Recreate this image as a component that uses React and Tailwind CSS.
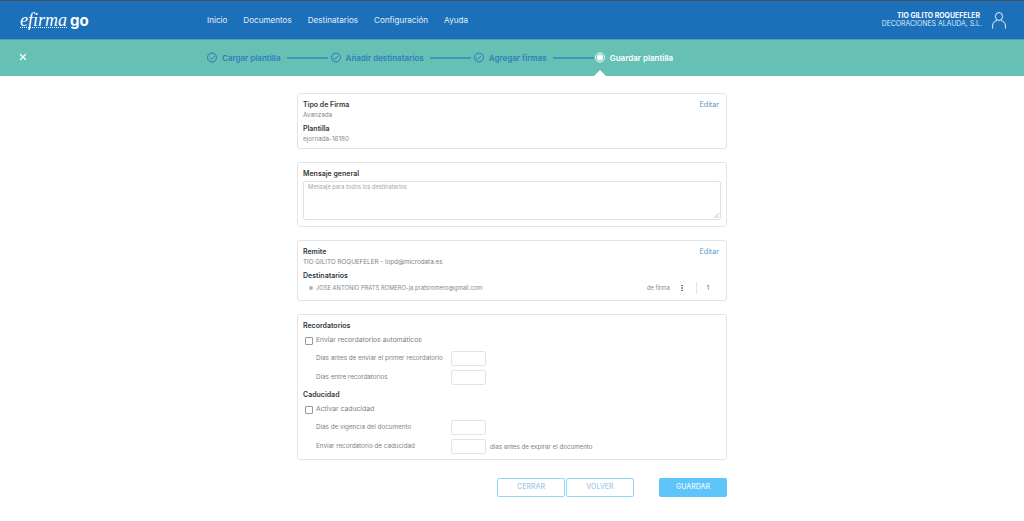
import { Check, X, EllipsisVertical } from 'lucide-react';

const navItems = ['Inicio', 'Documentos', 'Destinatarios', 'Configuración', 'Ayuda'];
const steps = ['Cargar plantilla', 'Añadir destinatarios', 'Agregar firmas'];

function Step({ label }) {
  return (
    <>
      <span className="w-[10px] h-[10px] rounded-full border border-[#2a77b8] flex items-center justify-center shrink-0">
        <Check className="w-[7px] h-[7px] text-[#2a77b8]" strokeWidth={3} />
      </span>
      <span className="ml-[5px] text-[8px] font-semibold text-[#2f7fbd] whitespace-nowrap">{label}</span>
      <span className="ml-[6px] mr-[3px] w-[41px] h-px bg-[#1c70b8] shrink-0" />
    </>
  );
}

function Heading({ children }) {
  return <p className="text-[7px] leading-[10px] font-semibold text-[#33383d]">{children}</p>;
}

function Field({ label, suffix }) {
  return (
    <div className="flex items-center h-[15px] pl-[13px]">
      <span className="w-[135px] text-[6.3px] text-[#7b7f83] whitespace-nowrap">{label}</span>
      <span className="w-[35px] h-[15px] rounded-[2px] border border-[#e2e4e6] shrink-0" />
      {suffix && <span className="ml-1 text-[6.2px] text-[#7b7f83] whitespace-nowrap">{suffix}</span>}
    </div>
  );
}

function CheckRow({ label }) {
  return (
    <div className="flex items-center h-[9px] pl-[2px]">
      <span className="w-2 h-2 rounded-[1px] border border-[#999999] shrink-0" />
      <span className="ml-[3px] text-[6.8px] text-[#7b7f83]">{label}</span>
    </div>
  );
}

export default function App() {
  return (
    <div className="w-[1024px] h-[521px] overflow-hidden bg-white font-['Inter','Open_Sans',sans-serif]">
      {/* Header */}
      <header className="h-[39px] bg-[#1b70b9] border-t border-[#44505a] flex items-center text-white">
        <div className="w-[207px] pl-[20px] flex items-center shrink-0">
          <span className="relative font-['Liberation_Serif',serif] italic text-[18px] leading-none">
            efirma
            <span className="absolute left-0 right-0 bottom-[1px] border-b border-dotted border-white" />
          </span>
          <span className="ml-[3px] font-bold text-[15px] leading-none">go</span>
        </div>
        <nav className="flex gap-4 text-[8.1px] text-[#e4eef7]">
          {navItems.map((item) => (
            <span key={item}>{item}</span>
          ))}
        </nav>
        <div className="ml-auto flex items-center pr-[18px]">
          <div className="text-right text-[6.9px] leading-[8px]">
            <p className="font-bold pr-[2px]">TIO GILITO ROQUEFELER</p>
            <p className="text-[#dbe8f4]">DECORACIONES ALAUDA, S.L.</p>
          </div>
          <svg className="ml-[10px] w-[14px] h-[17px]" viewBox="0 0 14 17" fill="none" stroke="white" strokeWidth="0.9">
            <ellipse cx="7" cy="4.5" rx="3.6" ry="4" />
            <path d="M0.6 16.5V13.5C0.6 10.5 3 9 5 8.6M13.4 16.5V13.5C13.4 10.5 11 9 9 8.6" />
          </svg>
        </div>
      </header>

      {/* Steps */}
      <div className="relative h-[37px] bg-[#66c0b4] flex items-center border-t border-[#4f9dbd]">
        <X className="absolute left-[18px] top-[12px] w-[10px] h-[10px] text-white" strokeWidth={3} />
        <div className="ml-[207px] flex items-center -translate-y-[0.5px]">
          {steps.map((step) => (
            <Step key={step} label={step} />
          ))}
          <span className="-ml-[2px] w-[10px] h-[10px] rounded-full border border-white flex items-center justify-center shrink-0">
            <span className="w-[6px] h-[6px] rounded-full bg-white" />
          </span>
          <span className="ml-[5px] text-[8px] font-semibold text-white whitespace-nowrap">Guardar plantilla</span>
        </div>
        <span className="absolute left-[594px] bottom-0 w-0 h-0 border-x-[6px] border-x-transparent border-b-[6px] border-b-white" />
      </div>

      {/* Content */}
      <main className="w-[430px] ml-[297px] pt-[17px] flex flex-col gap-[13px]">
        <section className="h-[56px] rounded-[3px] border border-[#e2e4e6] px-[5px] pt-[6px] relative">
          <span className="absolute right-[7px] top-[6px] text-[7.2px] leading-[10px] text-[#5f97c9]">Editar</span>
          <Heading>Tipo de Firma</Heading>
          <p className="text-[6.3px] leading-[10px] text-[#85888c]">Avanzada</p>
          <div className="mt-[4px]"><Heading>Plantilla</Heading></div>
          <p className="text-[6.3px] leading-[10px] text-[#85888c]">ejornada-16180</p>
        </section>

        <section className="h-[65px] rounded-[3px] border border-[#e2e4e6] px-[5px] pt-[6px]">
          <Heading>Mensaje general</Heading>
          <div className="relative mt-[2px] h-[39px] rounded-[2px] border border-[#dfe1e3] px-[4px] text-[5.7px] leading-[9px] text-[#a3a6a9]">
            Mensaje para todos los destinatarios
            <svg className="absolute right-[1px] bottom-[1px] w-[5px] h-[5px]" viewBox="0 0 5 5">
              <path d="M0 5 5 0M2.5 5 5 2.5" stroke="#999" strokeWidth="0.6" />
            </svg>
          </div>
        </section>

        <section className="h-[61px] rounded-[3px] border border-[#e2e4e6] px-[5px] pt-[6px] relative">
          <span className="absolute right-[7px] top-[6px] text-[7.2px] leading-[10px] text-[#5f97c9]">Editar</span>
          <Heading>Remite</Heading>
          <p className="text-[6.3px] leading-[10px] text-[#7b7f83]">TIO GILITO ROQUEFELER - lopd@microdata.es</p>
          <div className="mt-[4px]"><Heading>Destinatarios</Heading></div>
          <div className="h-[14px] flex items-center pl-[6px] text-[5.8px] text-[#85888c]">
            <span className="w-[4px] h-[4px] rounded-full bg-[#b5b8ba]" />
            <span className="ml-[3px]">JOSE ANTONIO PRATS ROMERO-ja.pratsromero@gmail.com</span>
            <span className="ml-auto">de firma</span>
            <EllipsisVertical className="ml-[8px] w-[8px] h-[8px] text-[#1b70b9]" strokeWidth={3} />
            <span className="ml-[10px] w-px h-[12px] bg-[#e2e4e6]" />
            <span className="ml-[10px] mr-[12px] text-[#55585c]">1</span>
          </div>
        </section>

        <section className="h-[146px] rounded-[3px] border border-[#e2e4e6] px-[5px] pt-[6px]">
          <Heading>Recordatorios</Heading>
          <div className="mt-[5px]"><CheckRow label="Enviar recordatorios automáticos" /></div>
          <div className="mt-[6px] flex flex-col gap-[4px]">
            <Field label="Días antes de enviar el primer recordatorio" />
            <Field label="Días entre recordatorios" />
          </div>
          <div className="mt-[5px]"><Heading>Caducidad</Heading></div>
          <div className="mt-[5px]"><CheckRow label="Activar caducidad" /></div>
          <div className="mt-[6px] flex flex-col gap-[4px]">
            <Field label="Días de vigencia del documento" />
            <Field label="Enviar recordatorio de caducidad" suffix="días antes de expirar el documento" />
          </div>
        </section>

        <div className="mt-[5px] flex text-[7px] font-medium">
          <button className="ml-[200px] w-[68px] h-[19px] rounded-[2px] border border-[#8fd6fb] text-[#a4c8e6]">CERRAR</button>
          <button className="ml-[1px] w-[68px] h-[19px] rounded-[2px] border border-[#8fd6fb] text-[#a4c8e6]">VOLVER</button>
          <button className="ml-auto w-[68px] h-[19px] rounded-[2px] bg-[#5ec5fb] text-[#eaf7fe]">GUARDAR</button>
        </div>
      </main>
    </div>
  );
}
